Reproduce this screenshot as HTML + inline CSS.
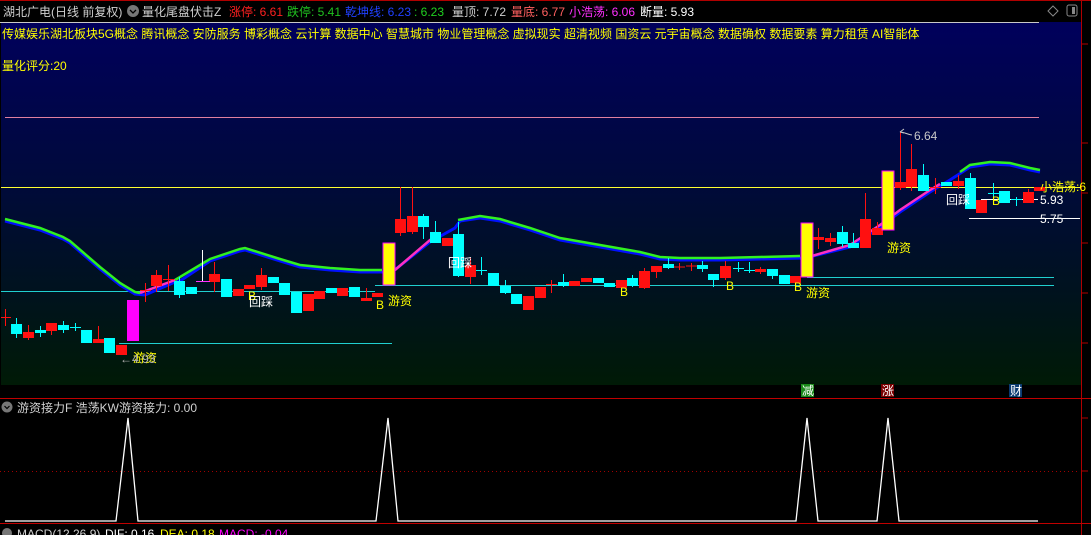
<!DOCTYPE html>
<html><head><meta charset="utf-8"><style>
html,body{margin:0;padding:0;background:#000;width:1091px;height:535px;overflow:hidden}
svg{display:block}
text{font-family:"Liberation Sans","Noto Sans CJK SC",sans-serif;font-size:12px}
</style></head><body>
<svg width="1091" height="535" viewBox="0 0 1091 535" xmlns="http://www.w3.org/2000/svg">
<defs>
<linearGradient id="bg" x1="0" y1="0" x2="0" y2="1">
<stop offset="0" stop-color="#00005c"/>
<stop offset="0.45" stop-color="#000a3a"/>
<stop offset="1" stop-color="#001a06"/>
</linearGradient>
</defs>
<rect x="0" y="0" width="1091" height="535" fill="#000"/>
<!-- top red ticks -->
<line x1="0" y1="0.5" x2="1091" y2="0.5" stroke="#b00000"/>
<rect x="1" y="22" width="1080" height="363" fill="url(#bg)"/>
<line x1="0" y1="22.5" x2="1039" y2="22.5" stroke="#c8c8c8"/>
<!-- right axis -->
<line x1="1081.5" y1="0" x2="1081.5" y2="535" stroke="#b00000"/>
<g stroke="#b00000"><line x1="1081" y1="44" x2="1088" y2="44"/><line x1="1081" y1="143" x2="1088" y2="143"/><line x1="1081" y1="193" x2="1088" y2="193"/><line x1="1081" y1="243" x2="1088" y2="243"/><line x1="1081" y1="293" x2="1088" y2="293"/><line x1="1081" y1="343" x2="1088" y2="343"/><line x1="1081" y1="418" x2="1088" y2="418"/><line x1="1081" y1="471" x2="1088" y2="471"/></g>
<!-- header -->
<text x="3" y="16" fill="#d0d0d0">湖北广电(日线 前复权)</text>
<circle cx="133" cy="11" r="6" fill="#777"/><path d="M130 10l3 3 3-3" stroke="#000" fill="none" stroke-width="1.3"/>
<text x="142" y="16" fill="#d0d0d0">量化尾盘伏击Z</text>
<text x="229" y="16" fill="#ff2020">涨停: 6.61</text>
<text x="287" y="16" fill="#20c020">跌停: 5.41</text>
<text x="345" y="16" fill="#2040ff">乾坤线: 6.23</text>
<text x="414" y="16" fill="#20d020">: 6.23</text>
<text x="452" y="16" fill="#d0d0d0">量顶: 7.72</text>
<text x="511" y="16" fill="#ff6060">量底: 6.77</text>
<text x="569" y="16" fill="#ff30ff">小浩荡: 6.06</text>
<text x="640" y="16" fill="#ffffff">断量: 5.93</text>
<path d="M1053 6l5 5-5 5-5-5z" stroke="#888" fill="none"/>
<rect x="1067" y="5" width="10" height="11" rx="2" stroke="#888" fill="none"/><rect x="1072" y="7" width="3" height="7" fill="#888"/>
<text x="2" y="38" fill="#ffff00">传媒娱乐湖北板块5G概念 腾讯概念 安防服务 博彩概念 云计算 数据中心 智慧城市 物业管理概念 虚拟现实 超清视频 国资云 元宇宙概念 数据确权 数据要素 算力租赁 AI智能体</text>
<text x="2" y="70" fill="#ffff00">量化评分:20</text>
<!-- horizontal lines -->
<line x1="5" y1="117.5" x2="1039" y2="117.5" stroke="#e080a0"/>
<line x1="1" y1="187.5" x2="1081" y2="187.5" stroke="#ffff30"/>
<line x1="1" y1="291.5" x2="375" y2="291.5" stroke="#20d0d0"/>
<line x1="375" y1="285.5" x2="1054" y2="285.5" stroke="#20d0d0"/>
<line x1="119" y1="343.5" x2="392" y2="343.5" stroke="#20d0d0"/>
<line x1="807" y1="277.5" x2="1054" y2="277.5" stroke="#20d0d0"/>
<line x1="981" y1="199.5" x2="1038" y2="199.5" stroke="#fff"/>
<line x1="969" y1="218.5" x2="1080" y2="218.5" stroke="#fff"/>
<!-- MA line -->
<polyline fill="none" stroke="#0010ff" stroke-width="3" points="5,220 40,229 63,238 70,242 100,268 120,284 135,293 145,294 175,281 180,280 210,260 240,250 245,249 280,260 300,266 330,269 360,271 392,271 430,241 455,227 460,220 480,217 500,220 530,229 560,239 600,246 640,253 660,258 680,259 720,259 760,258 805,257 850,246 880,226 900,211 930,191 950,179 970,166 990,163 1010,164 1030,169 1040,171" transform="translate(0,1)"/>
<polyline fill="none" stroke="#30f020" stroke-width="2.5" points="5,219 40,228 63,237 70,241 100,267 120,283 135,292 140,293"/>
<polyline fill="none" stroke="#ff30c0" stroke-width="2.5" points="140,293 175,280"/>
<polyline fill="none" stroke="#30f020" stroke-width="2.5" points="175,280 210,259 240,249 245,248 280,259 300,265 330,268 360,270 382,270"/>
<polyline fill="none" stroke="#ff30c0" stroke-width="2.5" points="395,270 430,240 440,234"/>
<polyline fill="none" stroke="#30f020" stroke-width="2.5" points="458,220 480,216 500,219 530,228 560,238 600,245 640,252 660,257 680,258 720,258 760,257 800,256"/>
<polyline fill="none" stroke="#ff30c0" stroke-width="2.5" points="812,256 850,245 880,225 900,210 930,190 940,184"/>
<polyline fill="none" stroke="#30f020" stroke-width="2.5" points="960,172 970,165 990,162 1010,163 1030,168 1040,170"/>
<!-- candles -->
<g id="c">
<!-- cyan -->
<g fill="#00ffff" stroke="#00ffff">
<line x1="16.5" y1="318" x2="16.5" y2="338"/><rect x="11" y="324" width="11" height="10" stroke="none"/>
<rect x="35" y="330" width="11" height="3" stroke="none"/><line x1="40.5" y1="326" x2="40.5" y2="337"/>
<rect x="58" y="325" width="11" height="5" stroke="none"/><line x1="63.5" y1="321" x2="63.5" y2="333"/>
<line x1="70" y1="327.5" x2="81" y2="327.5"/><line x1="75.5" y1="323" x2="75.5" y2="331"/>
<rect x="81" y="330" width="11" height="13" stroke="none"/>
<rect x="104" y="338" width="11" height="15" stroke="none"/>
<rect x="174" y="281" width="11" height="14" stroke="none"/><line x1="179.5" y1="277" x2="179.5" y2="298"/>
<rect x="186" y="287" width="11" height="7" stroke="none"/>
<rect x="221" y="279" width="11" height="18" stroke="none"/>
<rect x="268" y="277" width="11" height="6" stroke="none"/>
<rect x="279" y="283" width="11" height="12" stroke="none"/>
<rect x="291" y="292" width="11" height="21" stroke="none"/>
<rect x="326" y="288" width="11" height="5" stroke="none"/>
<rect x="349" y="287" width="11" height="10" stroke="none"/>
<rect x="418" y="216" width="11" height="11" stroke="none"/><line x1="423.5" y1="214" x2="423.5" y2="239"/>
<rect x="430" y="232" width="11" height="11" stroke="none"/><line x1="435.5" y1="221" x2="435.5" y2="243"/>
<rect x="453" y="234" width="11" height="42" stroke="none"/><line x1="458.5" y1="222" x2="458.5" y2="277"/>
<line x1="476" y1="270.5" x2="487" y2="270.5"/><line x1="481.5" y1="257" x2="481.5" y2="275"/>
<rect x="488" y="273" width="11" height="13" stroke="none"/>
<rect x="500" y="286" width="11" height="7" stroke="none"/><line x1="505.5" y1="280" x2="505.5" y2="294"/>
<rect x="511" y="294" width="11" height="10" stroke="none"/>
<rect x="558" y="282" width="11" height="4" stroke="none"/><line x1="563.5" y1="274" x2="563.5" y2="287"/>
<rect x="593" y="278" width="11" height="5" stroke="none"/>
<rect x="604" y="283" width="11" height="4" stroke="none"/>
<rect x="627" y="278" width="11" height="8" stroke="none"/><line x1="632.5" y1="275" x2="632.5" y2="287"/>
<rect x="663" y="264" width="11" height="4" stroke="none"/><line x1="668.5" y1="258" x2="668.5" y2="269"/>
<rect x="697" y="265" width="11" height="4" stroke="none"/><line x1="702.5" y1="261" x2="702.5" y2="272"/>
<rect x="708" y="274" width="11" height="6" stroke="none"/><line x1="713.5" y1="274" x2="713.5" y2="287"/>
<line x1="733" y1="268.5" x2="744" y2="268.5"/><line x1="738.5" y1="262" x2="738.5" y2="272"/>
<line x1="744" y1="270.5" x2="755" y2="270.5"/><line x1="749.5" y1="262" x2="749.5" y2="273"/>
<rect x="767" y="269" width="11" height="7" stroke="none"/><line x1="772.5" y1="269" x2="772.5" y2="279"/>
<rect x="779" y="275" width="11" height="9" stroke="none"/>
<rect x="837" y="232" width="11" height="12" stroke="none"/><line x1="842.5" y1="226" x2="842.5" y2="247"/>
<rect x="848" y="243" width="11" height="5" stroke="none"/><line x1="853.5" y1="233" x2="853.5" y2="248"/>
<rect x="918" y="175" width="11" height="16" stroke="none"/><line x1="923.5" y1="164" x2="923.5" y2="191"/>
<rect x="941" y="182" width="11" height="4" stroke="none"/>
<rect x="965" y="178" width="11" height="31" stroke="none"/><line x1="970.5" y1="173" x2="970.5" y2="209"/>
<line x1="988" y1="193.5" x2="999" y2="193.5"/><line x1="993.5" y1="183" x2="993.5" y2="200"/>
<rect x="999" y="191" width="11" height="12" stroke="none"/>
<line x1="1011" y1="199.5" x2="1022" y2="199.5"/><line x1="1016.5" y1="197" x2="1016.5" y2="206"/>
</g>
<g fill="#ff1010" stroke="#ff1010">
<line x1="1" y1="317.5" x2="11" y2="317.5"/><line x1="5.5" y1="309" x2="5.5" y2="326"/>
<rect x="23" y="332" width="11" height="6" stroke="none"/><line x1="28.5" y1="325" x2="28.5" y2="340"/>
<rect x="46" y="323" width="11" height="8" stroke="none"/><line x1="51.5" y1="323" x2="51.5" y2="335"/>
<rect x="93" y="339" width="11" height="4" stroke="none"/><line x1="98.5" y1="326" x2="98.5" y2="343"/>
<rect x="116" y="345" width="11" height="10" stroke="none"/>
<line x1="140" y1="290.5" x2="151" y2="290.5"/><line x1="145.5" y1="283" x2="145.5" y2="302"/>
<rect x="151" y="275" width="11" height="11" stroke="none"/><line x1="156.5" y1="270" x2="156.5" y2="292"/>
<line x1="163" y1="279.5" x2="174" y2="279.5"/><line x1="168.5" y1="265" x2="168.5" y2="291"/>
<rect x="209" y="274" width="11" height="8" stroke="none"/><line x1="214.5" y1="262" x2="214.5" y2="292"/>
<rect x="233" y="289" width="11" height="7" stroke="none"/>
<rect x="244" y="285" width="11" height="4" stroke="none"/>
<rect x="256" y="275" width="11" height="12" stroke="none"/><line x1="261.5" y1="268" x2="261.5" y2="290"/>
<rect x="303" y="294" width="11" height="17" stroke="none"/>
<rect x="314" y="291" width="11" height="8" stroke="none"/>
<rect x="337" y="288" width="11" height="8" stroke="none"/>
<rect x="361" y="298" width="11" height="3" stroke="none"/><line x1="366.5" y1="288" x2="366.5" y2="301"/>
<rect x="372" y="293" width="11" height="4" stroke="none"/>
<rect x="395" y="219" width="11" height="14" stroke="none"/><line x1="400.5" y1="187" x2="400.5" y2="236"/>
<rect x="407" y="216" width="11" height="16" stroke="none"/><line x1="412.5" y1="187" x2="412.5" y2="234"/>
<rect x="442" y="238" width="11" height="8" stroke="none"/>
<rect x="465" y="265" width="11" height="12" stroke="none"/><line x1="470.5" y1="258" x2="470.5" y2="284"/>
<rect x="523" y="296" width="11" height="14" stroke="none"/>
<rect x="535" y="287" width="11" height="11" stroke="none"/>
<line x1="546" y1="284.5" x2="557" y2="284.5"/><line x1="551.5" y1="280" x2="551.5" y2="293"/>
<rect x="569" y="281" width="11" height="5" stroke="none"/>
<rect x="581" y="278" width="11" height="4" stroke="none"/>
<rect x="616" y="280" width="11" height="8" stroke="none"/>
<rect x="639" y="271" width="11" height="17" stroke="none"/><line x1="644.5" y1="268" x2="644.5" y2="289"/>
<rect x="651" y="266" width="11" height="6" stroke="none"/><line x1="656.5" y1="266" x2="656.5" y2="278"/>
<line x1="674" y1="267" x2="685" y2="267"/><line x1="679.5" y1="263" x2="679.5" y2="270"/>
<line x1="686" y1="266" x2="697" y2="266"/><line x1="691.5" y1="263" x2="691.5" y2="271"/>
<rect x="720" y="266" width="11" height="12" stroke="none"/><line x1="725.5" y1="261" x2="725.5" y2="280"/>
<rect x="755" y="269" width="11" height="3" stroke="none"/><line x1="760.5" y1="267" x2="760.5" y2="274"/>
<rect x="790" y="276" width="11" height="7" stroke="none"/>
<rect x="813" y="237" width="11" height="3" stroke="none"/><line x1="818.5" y1="228" x2="818.5" y2="249"/>
<rect x="825" y="238" width="11" height="4" stroke="none"/><line x1="830.5" y1="233" x2="830.5" y2="246"/>
<rect x="860" y="219" width="11" height="29" stroke="none"/><line x1="865.5" y1="193" x2="865.5" y2="248"/>
<rect x="872" y="228" width="11" height="7" stroke="none"/><line x1="877.5" y1="222" x2="877.5" y2="235"/>
<rect x="895" y="182" width="11" height="6" stroke="none"/><line x1="900.5" y1="132" x2="900.5" y2="190"/>
<rect x="906" y="169" width="11" height="18" stroke="none"/><line x1="911.5" y1="144" x2="911.5" y2="191"/>
<line x1="930" y1="187.5" x2="941" y2="187.5"/><line x1="935.5" y1="178" x2="935.5" y2="194"/>
<rect x="953" y="181" width="11" height="5" stroke="none"/><line x1="958.5" y1="175" x2="958.5" y2="189"/>
<rect x="976" y="200" width="11" height="13" stroke="none"/>
<rect x="1023" y="192" width="11" height="11" stroke="none"/><line x1="1028.5" y1="189" x2="1028.5" y2="203"/>
<rect x="1034" y="187" width="11" height="4" stroke="none"/>
</g>
<!-- special bars -->
<rect x="127" y="300" width="12" height="41" fill="#ff00ff"/>
<rect x="383" y="243" width="12" height="42" fill="#ffff00" stroke="#ff00ff" stroke-width="1"/>
<rect x="801" y="223" width="12" height="54" fill="#ffff00" stroke="#ff00ff" stroke-width="1"/>
<rect x="882" y="171" width="12" height="59" fill="#ffff00" stroke="#ff00ff" stroke-width="1"/>
<line x1="196" y1="281.5" x2="210" y2="281.5" stroke="#ff30ff"/><line x1="202.5" y1="250" x2="202.5" y2="281" stroke="#fff"/>
</g>
<!-- labels -->
<g fill="#ffff00">
<text x="133" y="362">游资</text><text x="388" y="305">游资</text><text x="806" y="297">游资</text><text x="887" y="252">游资</text>
<text x="248" y="300" font-size="10">B</text><text x="376" y="309" font-size="10">B</text><text x="620" y="296" font-size="10">B</text><text x="726" y="290" font-size="10">B</text><text x="794" y="291" font-size="10">B</text><text x="992" y="205" font-size="10">B</text>
<text x="1040" y="191">小浩荡:6</text>
</g>
<g fill="#fff">
<text x="249" y="306">回踩</text><text x="448" y="267">回踩</text><text x="946" y="204">回踩</text>
<text x="1040" y="204">5.93</text><text x="1040" y="223">5.75</text>
</g>
<text x="914" y="140" fill="#c8c8c8">6.64</text><path d="M900 132l4-3M900 132l4 1M900 132c4 0 6 2 12 3" stroke="#c8c8c8" fill="none"/>
<text x="120" y="363" fill="#b0b0b0">←4.93</text>
<!-- bottom strip labels -->
<rect x="801" y="384" width="13" height="13" fill="#1a8a1a"/><text x="802" y="395" fill="#fff" font-size="11">减</text>
<rect x="881" y="384" width="13" height="13" fill="#7a0000"/><text x="882" y="395" fill="#fff" font-size="11">涨</text>
<rect x="1009" y="384" width="13" height="13" fill="#0a3a70"/><text x="1010" y="395" fill="#fff" font-size="11">财</text>
<!-- indicator panel -->
<line x1="0" y1="398.5" x2="1091" y2="398.5" stroke="#c00000"/>
<line x1="0" y1="523.5" x2="1091" y2="523.5" stroke="#c00000"/>
<circle cx="7" cy="407" r="5.5" fill="#777"/><path d="M4.5 406l2.5 2.5 2.5-2.5" stroke="#000" fill="none" stroke-width="1.2"/>
<text x="17" y="412" fill="#d0d0d0">游资接力F 浩荡KW游资接力: 0.00</text>
<line x1="0" y1="471.5" x2="1078" y2="471.5" stroke="#a00000" stroke-dasharray="1,3"/>
<polyline fill="none" stroke="#fff" stroke-width="1.3" points="5,521 116,521 128,418 138,521 376,521 388,418 398,521 796,521 807,418 818,521 877,521 888,418 899,521 1038,521"/>
<circle cx="7" cy="533" r="5" fill="#777"/>
<text x="17" y="538" fill="#d0d0d0">MACD(12,26,9)</text><text x="105" y="538" fill="#fff">DIF: 0.16</text><text x="160" y="538" fill="#ffff00">DEA: 0.18</text><text x="219" y="538" fill="#ff00ff">MACD: -0.04</text>
</svg>
</body></html>
